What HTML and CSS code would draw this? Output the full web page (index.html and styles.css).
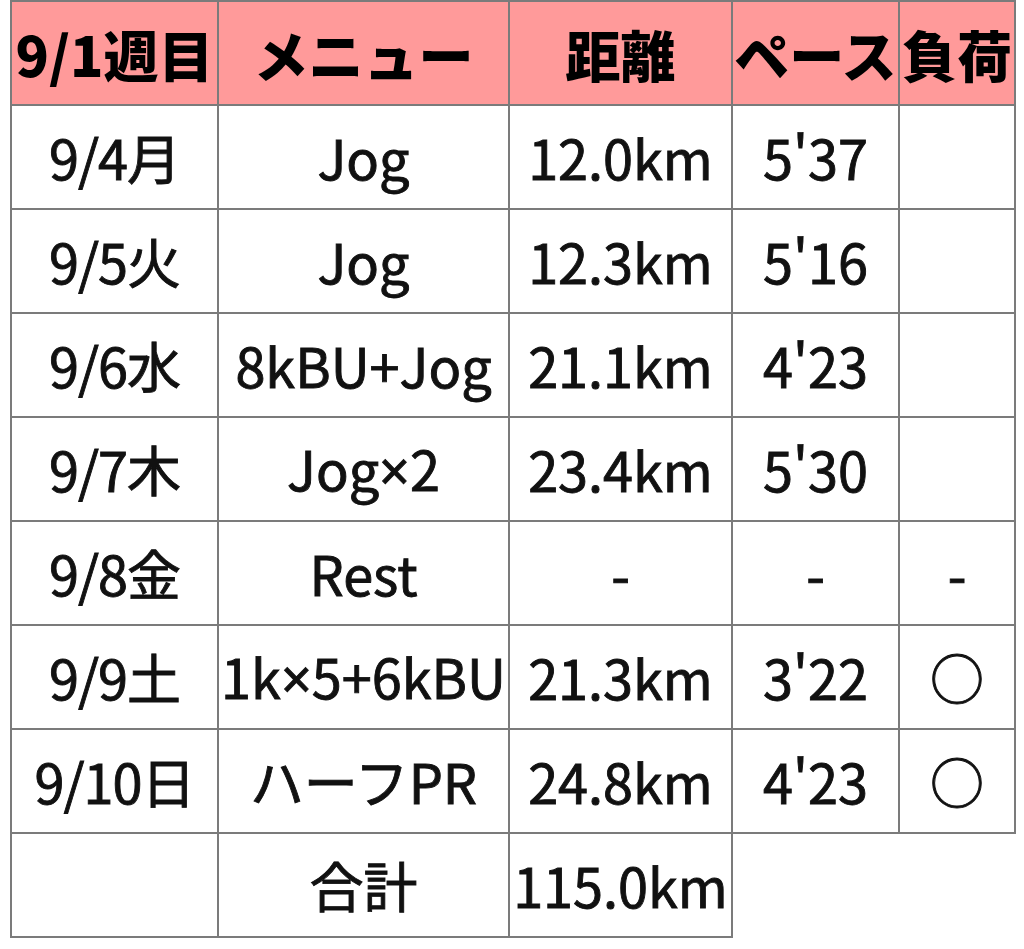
FILE: index.html
```html
<!DOCTYPE html>
<html lang="ja">
<head>
<meta charset="utf-8">
<link rel="stylesheet" href="styles.css">
</head>
<body>
<table class="log">
  <colgroup>
    <col class="c1"><col class="c2"><col class="c3"><col class="c4"><col class="c5">
  </colgroup>
  <thead>
    <tr><th>9/1週目</th><th>メニュー</th><th>距離</th><th>ペース</th><th>負荷</th></tr>
  </thead>
  <tbody>
    <tr><td>9/4月</td><td>Jog</td><td>12.0km</td><td>5'37</td><td></td></tr>
    <tr><td>9/5火</td><td>Jog</td><td>12.3km</td><td>5'16</td><td></td></tr>
    <tr><td>9/6水</td><td>8kBU+Jog</td><td>21.1km</td><td>4'23</td><td></td></tr>
    <tr><td>9/7木</td><td>Jog<span class="x">×</span>2</td><td>23.4km</td><td>5'30</td><td></td></tr>
    <tr><td>9/8金</td><td>Rest</td><td>-</td><td>-</td><td>-</td></tr>
    <tr><td>9/9土</td><td>1k<span class="x">×</span>5+6kBU</td><td>21.3km</td><td>3'22</td><td>○</td></tr>
    <tr><td>9/10日</td><td>ハーフPR</td><td>24.8km</td><td>4'23</td><td>○</td></tr>
    <tr><td></td><td>合計</td><td>115.0km</td></tr>
  </tbody>
</table>
</body>
</html>
```

FILE: styles.css
```css
html, body {
  margin: 0;
  padding: 0;
  background: #ffffff;
}
body {
  padding-left: 10px;
  font-family: "Noto Sans CJK JP", "Noto Sans", sans-serif;
  color: #111111;
}
.log {
  border-collapse: collapse;
  table-layout: fixed;
  width: 1006px;
}
.c1 { width: 207px; }
.c2 { width: 291px; }
.c3 { width: 223px; }
.c4 { width: 167px; }
.c5 { width: 116px; }
.log th, .log td {
  border: 2px solid #7b7b7b;
  height: 102px;
  padding: 0;
  text-align: center;
  vertical-align: middle;
  white-space: nowrap;
  overflow: hidden;
  line-height: 1;
}
.log th {
  background: #ff9a9a;
  font-weight: 900;
  font-size: 55px;
  color: #000000;
}
.log td {
  font-size: 54px;
  font-weight: 400;
  -webkit-text-stroke: 0.9px #111111;
}
.log td:first-child {
  letter-spacing: -1px;
}
.x {
  font-family: "Noto Sans", sans-serif;
}
```
